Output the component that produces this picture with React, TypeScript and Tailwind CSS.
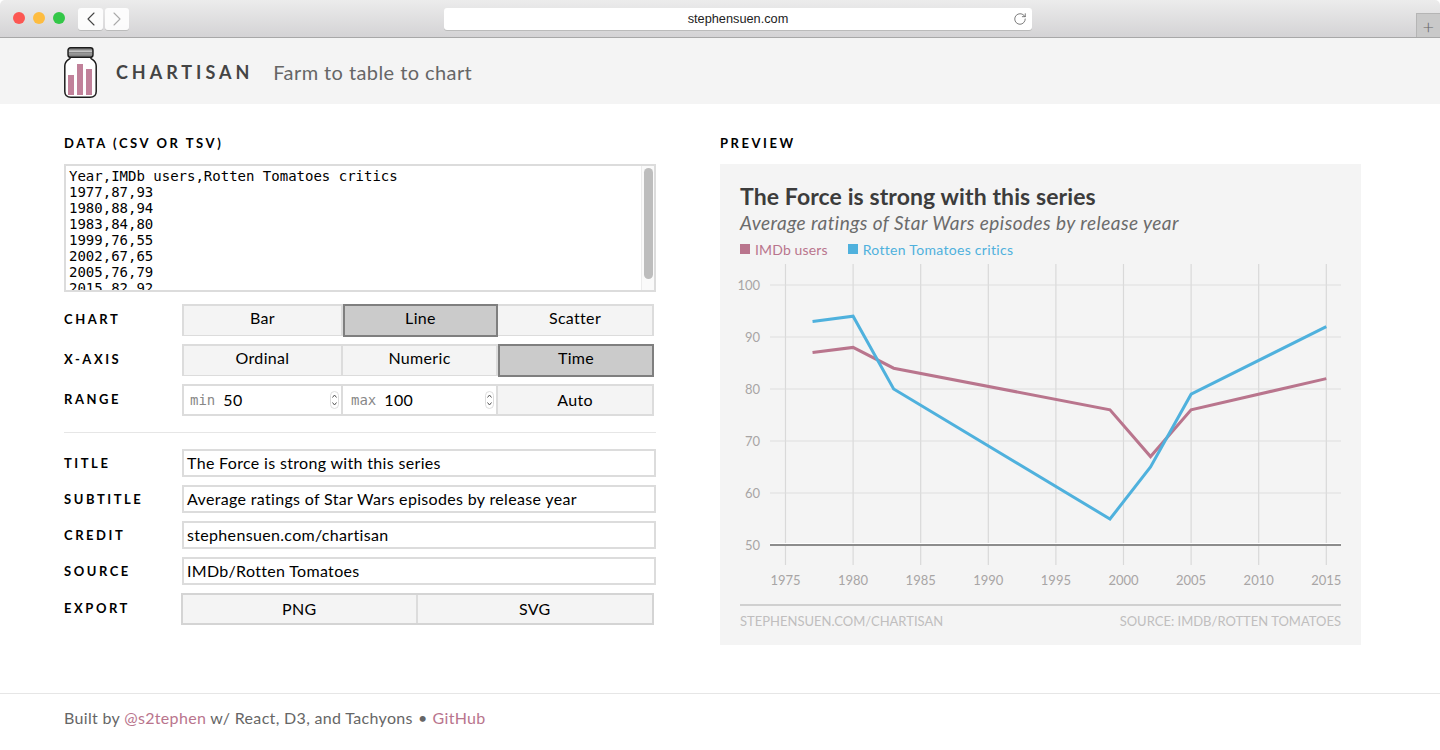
import { ChevronLeft, ChevronRight, RotateCw } from 'lucide-react'

const csv = `Year,IMDb users,Rotten Tomatoes critics
1977,87,93
1980,88,94
1983,84,80
1999,76,55
2002,67,65
2005,76,79
2015,82,92`

const rows = [
  [1977, 87, 93],
  [1980, 88, 94],
  [1983, 84, 80],
  [1999, 76, 55],
  [2002, 67, 65],
  [2005, 76, 79],
  [2015, 82, 92],
]

const PINK = '#b9758d'
const BLUE = '#4fb1dd'
const sx = (year: number) => 785.5 + (year - 1975) * 13.52
const sy = (v: number) => 545 - (v - 50) * 5.2
const line = (i: number) => rows.map((r) => `${sx(r[0])},${sy(r[i])}`).join(' ')

function Jar() {
  return (
    <svg width="33" height="51" viewBox="0 0 33 51" className="shrink-0">
      <path d="M6 10 L6 11.5 C3.5 13.5 0.8 14.5 0.8 19 L0.8 44.5 C0.8 48.5 3.5 50.2 7 50.2 L26 50.2 C29.5 50.2 32.2 48.5 32.2 44.5 L32.2 19 C32.2 14.5 29.5 13.5 27 11.5 L27 10 Z" fill="#fff" stroke="#1c1c1c" strokeWidth="1.5" />
      <rect x="4" y="0.7" width="25" height="9.6" rx="2.5" fill="#858585" stroke="#1c1c1c" strokeWidth="1.4" />
      <rect x="5" y="3.4" width="23" height="1.6" fill="#c4c4c4" />
      <rect x="5" y="6.4" width="23" height="1" fill="#a6a6a6" />
      <rect x="4" y="28" width="6" height="20" fill="#c1819a" />
      <rect x="13" y="17" width="6" height="31" fill="#c1819a" />
      <rect x="22" y="22" width="6" height="26" fill="#c1819a" />
    </svg>
  )
}

function Browser() {
  return (
    <div className="relative flex h-[38px] items-start rounded-t-[5px] border-b border-[#a8a8a8] bg-gradient-to-b from-[#ececec] to-[#d4d3d5] pl-[13px] pt-2">
      <div className="mt-1 flex gap-2">
        <span className="h-3 w-3 rounded-full bg-[#fc5753]" />
        <span className="h-3 w-3 rounded-full bg-[#fdbc40]" />
        <span className="h-3 w-3 rounded-full bg-[#33c748]" />
      </div>
      <div className="ml-[13px] flex gap-[2px]">
        <span className="flex h-[22px] w-[25px] items-center justify-center rounded-[3px] bg-white/90 shadow-[0_1px_0_#bbb]">
          <ChevronLeft size={24} strokeWidth={1.1} className="text-[#444]" />
        </span>
        <span className="flex h-[22px] w-[24px] items-center justify-center rounded-[3px] bg-white/90 shadow-[0_1px_0_#bbb]">
          <ChevronRight size={24} strokeWidth={1.1} className="text-[#aaa]" />
        </span>
      </div>
      <div className="relative ml-[315px] flex h-[22px] w-[588px] items-center justify-center rounded-[3px] bg-white shadow-[0_1px_0_#bbb] font-['Liberation_Sans',sans-serif] text-[12.75px] tracking-normal text-[#222]">
        stephensuen.com
        <RotateCw size={14} strokeWidth={1.3} className="absolute right-[5px] top-[4px] text-[#555]" />
      </div>
      <span className="absolute bottom-0 right-0 flex h-6 w-6 items-center justify-center border-l border-t border-[#b5b5b5] bg-[#c9c9c9] text-[20px] font-light leading-none text-[#666]">
        +
      </span>
    </div>
  )
}

function Label({ children, raised }: { children: string; raised?: boolean }) {
  return (
    <div className={`w-[118px] shrink-0 whitespace-nowrap text-[13px] font-bold uppercase leading-none tracking-[2.55px] text-black ${raised ? 'mb-[2px]' : ''}`}>
      {children}
    </div>
  )
}

function Seg({ text, active, last, low }: { text: string; active?: boolean; last?: boolean; low?: boolean }) {
  if (active) {
    return (
      <div className={`-my-[2px] flex items-center justify-center border-2 border-[#7f7f7f] bg-[#cbcbcb] pb-[5px] ${last ? '-mr-[2px]' : ''}`}>
        {text}
      </div>
    )
  }
  return (
    <div className={`flex items-center justify-center bg-[#f4f4f4] ${low ? 'pb-[1px]' : 'pb-[5px]'} ${last ? '' : 'border-r-2 border-[#dcdcdc]'}`}>
      {text}
    </div>
  )
}

function Spinner() {
  return (
    <svg width="9" height="18" viewBox="0 0 9 18" className="shrink-0">
      <rect x="0.5" y="0.5" width="8" height="17" rx="4" fill="#fff" stroke="#ddd" />
      <path d="M2.5 6.5 L4.5 4 L6.5 6.5 M2.5 11.5 L4.5 14 L6.5 11.5" fill="none" stroke="#555" strokeWidth="1" />
    </svg>
  )
}

function RangeInput({ label, value, wide }: { label: string; value: string; wide?: boolean }) {
  return (
    <div className={`flex items-center border-r-2 border-[#dcdcdc] bg-white pr-[2px] ${wide ? 'pl-[8px]' : 'pl-[6px]'}`}>
      <span className="font-['DejaVu_Sans_Mono',monospace] text-[14px] tracking-normal text-[#888]">{label}</span>
      <span className="ml-[8px] flex-1">{value}</span>
      <Spinner />
    </div>
  )
}

function Field({ label, value }: { label: string; value: string }) {
  return (
    <div className="flex items-center">
      <Label>{label}</Label>
      <div className="flex h-7 flex-1 items-center border-2 border-[#dcdcdc] bg-white pb-[1px] pl-[3px]">{value}</div>
    </div>
  )
}

function Chart() {
  return (
    <svg width="601" height="330" viewBox="740 258 601 330" className="block overflow-visible font-['Lato',sans-serif] tracking-normal">
      {[1975, 1980, 1985, 1990, 1995, 2000, 2005, 2010, 2015].map((y) => (
        <g key={y}>
          <line x1={sx(y)} x2={sx(y)} y1="264" y2="565" stroke="#d9d9d9" strokeWidth="1.2" />
          <text x={sx(y)} y="585" textAnchor="middle" fontSize="13" fill="#a8a5a5">{y}</text>
        </g>
      ))}
      {[60, 70, 80, 90, 100].map((v) => (
        <line key={v} x1="770" x2="1341" y1={sy(v)} y2={sy(v)} stroke="#dedede" strokeWidth="1.2" />
      ))}
      {[50, 60, 70, 80, 90, 100].map((v) => (
        <text key={v} x="760" y={sy(v) + 5} textAnchor="end" fontSize="13" fill="#a8a5a5">{v}</text>
      ))}
      <line x1="770" x2="1341" y1="543.5" y2="543.5" stroke="#fff" strokeWidth="1" />
      <line x1="770" x2="1341" y1="545" y2="545" stroke="#8c8c8c" strokeWidth="2" />
      <polyline points={line(1)} fill="none" stroke={PINK} strokeWidth="3" />
      <polyline points={line(2)} fill="none" stroke={BLUE} strokeWidth="3" />
    </svg>
  )
}

const segGrid = 'grid h-full w-[472px] grid-cols-[159px_155px_1fr] border-2 border-[#dcdcdc]'

export default function App() {
  return (
    <div className="h-[750px] overflow-hidden bg-white font-['Lato',sans-serif] text-[16px] tracking-[0.33px] text-black">
      <Browser />

      <header className="flex h-[66px] items-center bg-[#f4f4f4] pl-[64px] pt-[2px]">
        <Jar />
        <span className="ml-[19px] text-[18px] font-bold uppercase tracking-[0.22em] text-[#444]">Chartisan</span>
        <span className="ml-[20px] text-[20px] tracking-[0.42px] text-[#666]">Farm to table to chart</span>
      </header>

      <main className="flex h-[589px] pl-[64px] pt-[33px]">
        <section className="w-[592px]">
          <Label>Data (CSV or TSV)</Label>
          <div className="mt-[14px] flex h-[128px] border-2 border-[#dcdcdc] bg-white">
            <div className="flex-1 overflow-hidden whitespace-pre pl-[3px] pt-[2px] font-['DejaVu_Sans_Mono',monospace] text-[14px] leading-[16px] tracking-normal">
              {csv}
            </div>
            <div className="w-[13px] border-l border-[#ececec] bg-[#fafafa] pl-[2px] pt-[2px]">
              <div className="h-[111px] w-[9px] rounded-full bg-[#bdbdbd]" />
            </div>
          </div>

          <div className="mt-3 flex h-8 items-center">
            <Label raised>Chart</Label>
            <div className={segGrid}>
              <Seg text="Bar" />
              <Seg text="Line" active />
              <Seg text="Scatter" last />
            </div>
          </div>
          <div className="mt-2 flex h-8 items-center">
            <Label raised>X-axis</Label>
            <div className={segGrid}>
              <Seg text="Ordinal" />
              <Seg text="Numeric" />
              <Seg text="Time" active last />
            </div>
          </div>
          <div className="mt-2 flex h-8 items-center">
            <Label raised>Range</Label>
            <div className={segGrid}>
              <RangeInput label="min" value="50" />
              <RangeInput label="max" value="100" wide />
              <Seg text="Auto" last low />
            </div>
          </div>

          <div className="mt-4 border-t border-[#e6e6e6]" />

          <div className="mt-4 flex flex-col gap-2">
            <Field label="Title" value="The Force is strong with this series" />
            <Field label="Subtitle" value="Average ratings of Star Wars episodes by release year" />
            <Field label="Credit" value="stephensuen.com/chartisan" />
            <Field label="Source" value="IMDb/Rotten Tomatoes" />
            <div className="flex h-8 items-center">
              <Label raised>Export</Label>
              <div className="-ml-px grid h-full w-[473px] grid-cols-2 border-2 border-[#d4d4d4]">
                <Seg text="PNG" low />
                <Seg text="SVG" last low />
              </div>
            </div>
          </div>
        </section>

        <section className="ml-[64px] w-[641px]">
          <Label>Preview</Label>
          <div className="mt-[14px] h-[481px] bg-[#f4f4f4] px-5 pt-[18px]">
            <h2 className="text-[23px] font-bold leading-[29px] tracking-[0.1px] text-[#3c3c3c]">The Force is strong with this series</h2>
            <p className="text-[19px] italic leading-[24px] tracking-[0.45px] text-[#6b6b6b]">Average ratings of Star Wars episodes by release year</p>
            <div className="mt-[5px] flex h-[18px] items-center text-[14px] tracking-[0.3px]">
              <span className="h-[10px] w-[10px] bg-[#b9758d]" />
              <span className="ml-[5px] tracking-[0.15px] text-[#b9758d]">IMDb users</span>
              <span className="ml-[20px] h-[10px] w-[10px] bg-[#4fb1dd]" />
              <span className="ml-[5px] text-[#4fb1dd]">Rotten Tomatoes critics</span>
            </div>
            <Chart />
            <div className="mt-4 flex justify-between border-t-2 border-[#d0d0d0] pt-[5px] text-[13px] uppercase leading-[20px] tracking-normal text-[#c0bebe]">
              <span>stephensuen.com/chartisan</span>
              <span>Source: IMDb/Rotten Tomatoes</span>
            </div>
          </div>
        </section>
      </main>

      <footer className="flex h-[57px] items-center border-t border-[#e6e6e6] pb-[8px] pl-[64px] text-[#666]">
        Built by&nbsp;<span className="text-[#b9758d]">@s2tephen</span>&nbsp;w/ React, D3, and Tachyons
        <span className="ml-[5px] mr-[5px]">•</span>
        <span className="text-[#b9758d]">GitHub</span>
      </footer>
    </div>
  )
}
